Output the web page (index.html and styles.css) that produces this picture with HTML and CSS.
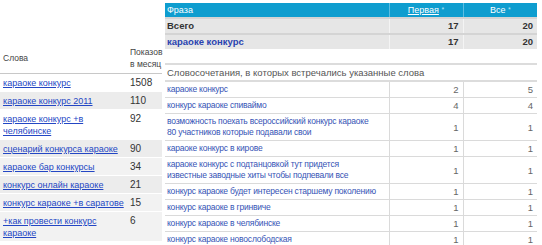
FILE: index.html
```html
<!DOCTYPE html>
<html lang="ru">
<head>
<meta charset="utf-8">
<link rel="stylesheet" href="styles.css">
</head>
<body>
<div class="page">
  <div class="left">
    <table class="words">
      <colgroup><col class="col-word"><col class="col-count"></colgroup>
      <thead>
        <tr><th>Слова</th><th class="w-num">Показов<br>в месяц</th></tr>
      </thead>
      <tbody>
        <tr class="r-white"><td><a href="#">караоке конкурс</a></td><td class="num">1508</td></tr>
        <tr class="r-gray"><td><a href="#">караоке конкурс 2011</a></td><td class="num">110</td></tr>
        <tr class="r-white"><td><a href="#">караоке конкурс +в челябинске</a></td><td class="num">92</td></tr>
        <tr class="r-gray"><td><a href="#">сценарий конкурса караоке</a></td><td class="num">90</td></tr>
        <tr class="r-light"><td><a href="#">караоке бар конкурсы</a></td><td class="num">34</td></tr>
        <tr class="r-gray"><td><a href="#">конкурс онлайн караоке</a></td><td class="num">21</td></tr>
        <tr class="r-light"><td><a href="#">конкурс караоке +в саратове</a></td><td class="num">15</td></tr>
        <tr class="r-light"><td><a href="#">+как провести конкурс караоке</a></td><td class="num">6</td></tr>
      </tbody>
    </table>
  </div>
  <div class="right">
    <table class="summary">
      <colgroup><col class="col-phrase"><col class="col-n"><col class="col-n"></colgroup>
      <thead>
        <tr>
          <th class="s-phrase">Фраза</th>
          <th class="s-col"><a href="#">Первая</a> <span class="sort">*</span></th>
          <th class="s-col">Все <span class="sort">*</span></th>
        </tr>
      </thead>
      <tbody>
        <tr class="total"><td>Всего</td><td class="num">17</td><td class="num">20</td></tr>
        <tr class="main"><td>караоке конкурс</td><td class="num">17</td><td class="num">20</td></tr>
      </tbody>
    </table>
    <table class="combos">
      <colgroup><col class="col-phrase"><col class="col-n"><col class="col-n"></colgroup>
      <thead>
        <tr><th colspan="3">Словосочетания, в которых встречались указанные слова</th></tr>
      </thead>
      <tbody>
        <tr><td class="c-phrase">караоке конкурс</td><td class="num">2</td><td class="num">5</td></tr>
        <tr><td class="c-phrase">конкурс караоке спиваймо</td><td class="num">4</td><td class="num">4</td></tr>
        <tr><td class="c-phrase">возможность поехать всероссийский конкурс караоке<br>80 участников которые подавали свои</td><td class="num">1</td><td class="num">1</td></tr>
        <tr><td class="c-phrase">караоке конкурс в кирове</td><td class="num">1</td><td class="num">1</td></tr>
        <tr><td class="c-phrase">караоке конкурс с подтанцовкой тут придется<br>известные заводные хиты чтобы подпевали все</td><td class="num">1</td><td class="num">1</td></tr>
        <tr><td class="c-phrase">конкурс караоке будет интересен старшему поколению</td><td class="num">1</td><td class="num">1</td></tr>
        <tr><td class="c-phrase">конкурс караоке в гринвиче</td><td class="num">1</td><td class="num">1</td></tr>
        <tr><td class="c-phrase">конкурс караоке в челябинске</td><td class="num">1</td><td class="num">1</td></tr>
        <tr><td class="c-phrase">конкурс караоке новослободская</td><td class="num">1</td><td class="num">1</td></tr>
      </tbody>
    </table>
  </div>
</div>
</body>
</html>
```
FILE: styles.css
```css
html, body {
  margin: 0;
  padding: 0;
  background: #ffffff;
}
body {
  font-family: "Liberation Sans", Arial, sans-serif;
  color: #333;
}
.page {
  display: flex;
  align-items: flex-start;
  width: 542px;
  height: 245px;
  overflow: hidden;
}
.left {
  width: 162px;
  flex: none;
  padding-top: 46px;
}
.words {
  width: 162px;
  border-collapse: collapse;
  table-layout: fixed;
}
.col-word { width: 127px; }
.col-count { width: 35px; }
.words th {
  font-weight: normal;
  font-size: 8.5px;
  line-height: 12px;
  color: #444;
  text-align: left;
  padding: 0 0 3px 3px;
  border-bottom: 1px solid #c8c8c8;
  vertical-align: middle;
}
.words th.w-num { vertical-align: top; white-space: nowrap; padding-left: 3px; }
.words td {
  font-size: 9px;
  line-height: 12px;
  padding: 3px 2px 2px 3px;
  vertical-align: top;
  border-bottom: 1px solid #fff;
}
.words td.num {
  font-size: 10px;
  color: #333;
  padding-left: 3px;
}
.words a {
  color: #2346c4;
  text-decoration: underline;
}
.r-white td { background: #ffffff; }
.r-gray td { background: #ececec; }
.r-light td { background: #f2f2f2; }

.right {
  width: 372px;
  flex: none;
  margin-left: 3px;
  padding-top: 3px;
}
.summary, .combos {
  width: 372px;
  border-collapse: collapse;
  table-layout: fixed;
}
.col-phrase { width: 224px; }
.col-n { width: 74px; }
.summary th {
  background: #0e9dcf;
  color: #fff;
  font-weight: normal;
  font-size: 9px;
  height: 14px;
  padding: 0 3px;
  line-height: 12px;
  border-right: 1px solid #5dbde2;
}
.summary th:last-child { border-right: none; }
.summary th.s-phrase { text-align: left; padding-left: 2px; }
.summary th.s-col { text-align: center; }
.summary th a { color: #fff; text-decoration: underline; }
.summary .sort { color: #b8e2f2; font-size: 7px; vertical-align: top; }
.summary td {
  background: #e6e6e6;
  font-weight: bold;
  font-size: 9.5px;
  height: 14px;
  line-height: 12px;
  padding: 0 3px 0 2px;
  border-top: 2px solid #d4d4d4;
  border-right: 1px solid #f4f4f4;
}
.summary td:last-child { border-right: none; }
.summary .total td { color: #333; }
.summary .main td:first-child { color: #2a43b0; }
.summary td.num { text-align: right; color: #333; padding-right: 4px; }

.combos {
  margin-top: 14px;
}
.combos th {
  text-align: left;
  font-weight: normal;
  font-size: 9.5px;
  color: #555;
  line-height: 12px;
  padding: 2px 2px 1px 2px;
  border-top: 2px solid #dcdcdc;
  border-bottom: 2px solid #dcdcdc;
}
.combos td {
  font-size: 8.5px;
  line-height: 11px;
  padding: 2px 2px 2px 2px;
  border-bottom: 1px solid #dadada;
  border-right: 1px solid #dadada;
  color: #666;
  vertical-align: middle;
}
.combos td:last-child { border-right: none; }
.combos td.c-phrase { color: #3553b5; letter-spacing: -0.2px; white-space: nowrap; }
.combos td.num { text-align: right; padding-right: 4px; font-size: 9.5px; }
```
